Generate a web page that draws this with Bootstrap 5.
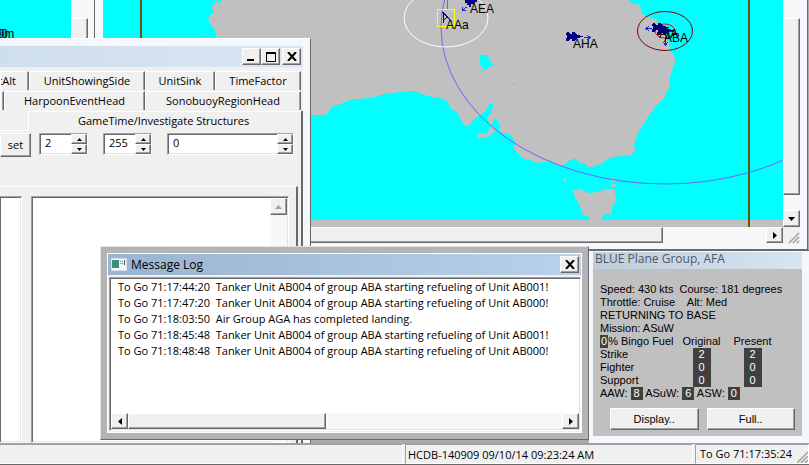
<!DOCTYPE html>
<html lang="en">
<head>
<meta charset="utf-8">
<meta name="viewport" content="width=device-width, initial-scale=1">
<title>Harpoon – Message Log</title>
<link href="https://cdn.jsdelivr.net/npm/bootstrap@5.3.0/dist/css/bootstrap.min.css" rel="stylesheet">
<style>
:root{--face:#f0f0f0;--frame:#f4f7fc;--shadow:#696969;--land:#c0c0c0;--sea:#0ff}
body{font:11px/16px "Open Sans","Noto Sans",sans-serif;color:#000;background:#ababab}
button,input{font:inherit;color:inherit;border-radius:0}
.win{position:absolute;background:var(--frame)}
.raised{background:var(--face);border:1px solid;border-color:#fff var(--shadow) var(--shadow) #fff;box-shadow:inset -1px -1px #a0a0a0;padding:0;display:flex;align-items:center;justify-content:center;flex:none}
.sunken{background:#fff;border:1px solid;border-color:#a0a0a0 #fff #fff #a0a0a0;box-shadow:inset 1px 1px var(--shadow),inset -1px -1px #e3e3e3}
.track{background:repeating-conic-gradient(#fff 0 25%,#f0f0f0 0 50%) 0 0/2px 2px}
.sb-btn{width:17px;height:17px}
.cap-btn{width:19px;height:17px}
.cap-close{margin-left:2px}
.win-left{left:0;top:0;width:95px;height:249px;border-right:1px solid var(--shadow)}
.win-map{left:95px;right:1px;top:0;height:250px;padding:0 7px 6px 8px;border-right:1px solid var(--shadow);border-bottom:1px solid var(--shadow)}
.v-bar{width:17px}
.h-bar{height:16px}
.thumb-v{height:177px;width:17px}
.track-gap{height:18px}
.win-dlg{left:0;top:38px;width:311px;bottom:0;padding:7px 7px 0 0;border-top:1px solid #fff;border-right:1px solid var(--shadow)}
.dlg-title{height:21px;background:linear-gradient(90deg,#cfdeec,#dae6f3);padding-right:2px}
.dlg-face{background:var(--face);padding-top:4px}
.tab-row{height:20px}
.tab-btn{background:var(--face);border:0;border-top:1px solid #fff;border-left:1px solid #fff;border-right:1px solid var(--shadow);box-shadow:inset -1px 0 #a0a0a0;padding:0;white-space:nowrap;overflow:hidden;height:19px;display:flex;align-items:center;justify-content:center;flex:none}
.w-cut{width:29px;justify-content:flex-end;padding-right:12px}
.w-side{width:116px}.w-sink{width:70px}.w-time{width:86px}
.w-gap{width:4px}.w-harp{width:141px}.w-sono{width:156px}
.tab-panel{border-right:2px solid var(--shadow)}
.panel-title{height:22px;line-height:18px;border-top:1px solid #fff;padding-left:49px}
.edge-l{width:29px;height:20px;border-bottom:1px solid #fff;border-right:1px solid #fff}
.ctl-row{height:24px;gap:15px}
.set-btn{width:31px;height:24px;margin-right:-7px}
.spin{height:22px}
.spin input{border:0;outline:0;background:none;min-width:0;flex:1;padding:0 0 2px 5px;line-height:16px}
.spin-btn{width:16px;height:10px}
.spin-a{width:49px}.spin-b{width:49px}.spin-c{width:127px}
.inner{border-top:1px solid #fff;border-right:2px solid var(--shadow);margin:29px 3px 0 0;padding:9px 7px 0 0}
.list-a{width:22px;border-left:0}
.list-b{margin-left:9px;padding:1px 1px 0 0}
.win-log{left:100px;top:246px;width:489px;height:194px;background:#b4b4b4;border:1px solid;border-color:#e3e3e3 var(--shadow) var(--shadow) #e3e3e3;padding:6px}
.log-in{background:#f0f0f0;border:1px solid #fff}
.log-title{height:21px;background:linear-gradient(90deg,#99b4d1,#b9d1ea);padding:0 2px 0 3px;font-size:12px}
.log-box{margin:2px 0 1px 1px;padding:1px}
.log-list{padding-left:7px;white-space:pre}
.w-thumb-log{width:198px}
.w-thumb-map{width:560px}
.win-plane{right:0;left:589px;top:250px;bottom:0;padding:1px 7px 7px 4px;border-top:1px solid var(--shadow)}
.plane-title{height:17px;line-height:13px;padding-left:2px;font-size:12px;color:#4b5866;background:linear-gradient(90deg,#bfcddb,#d7e4f2)}
.plane-body{background:var(--land);font:11px/13px "Liberation Sans",Arial,sans-serif;padding:14px 7px 0 7px;white-space:pre}
.plane-body table{width:178px;table-layout:fixed}
.plane-body th,.plane-body td{padding:0;font-weight:400}
.c-label{width:76px}
.val{background:#404040;color:#fff;display:inline-block;height:13px;padding:0 3px}
.val-s{padding:0 1px}
.val-w{width:18px}
.plane-btns{margin:8px 0 0 10px}
.plane-btn{height:22px;flex:1}
.status{height:22px;background:var(--face);border-top:1px solid #a0a0a0;border-bottom:1px solid var(--shadow);line-height:19px}
.cell{border:1px solid;border-color:#a0a0a0 #fff #fff #a0a0a0;padding-left:2px;white-space:nowrap}
.cell-a{flex:1;border-left:0}
.cell-b{width:288px}.cell-c{width:114px;padding-left:4px}
.gap-s{gap:2px}
.map-text{font:12px "Liberation Sans",Arial,sans-serif}
</style>
<script src="https://cdn.jsdelivr.net/npm/bootstrap@5.3.0/dist/js/bootstrap.bundle.min.js"></script>
</head>
<body class="vh-100 d-flex flex-column overflow-hidden">
<main class="flex-grow-1 position-relative overflow-hidden">

  <section class="win win-left d-flex" aria-label="Unit map">
    <svg width="71" height="249" class="flex-shrink-0"><rect width="71" height="249" fill="#0ff"/><g class="map-text"><text x="-12" y="38">000</text><text x="-9" y="38">00m</text></g></svg>
    <div class="track v-bar d-flex flex-column"><div class="track-gap"></div><div class="raised w-100 flex-grow-1"></div></div>
  </section>

  <section class="win win-map d-flex flex-column" aria-label="Strategic map">
    <div class="d-flex flex-grow-1 overflow-hidden">
      <svg class="flex-grow-1 h-100" style="min-width:0" viewBox="103 0 680 227" preserveAspectRatio="xMaxYMin slice" shape-rendering="crispEdges">
        <rect x="103" width="680" height="227" fill="#0ff"/>
        <path fill="#c0c0c0" d="M216 0L215 4 212 6 213 12 208 19 211 25 215 30 217 38 220 115 H325L329 111 332 107 340 104 353 99 372 98 380 95 390 93 402 92 415 91 422 94 428 96 440 98 442 100 447 101 449 104 450 108 457 112 460 118 463 122 464 126 468 126 471 124 473 120 480 115 485 112 488 106 491 102 493 105 492 112 489 115 488 120 490 125 493 123 493 119 496 118 500 125 499 131 503 133 509 134 514 138 515 143 514 148 518 154 522 158 530 160 536 163 541 162 550 162 559 166 565 164 570 160 576 158 579 163 584 163 589 167 596 166 603 163 608 159 612 157 632 155 635 150 634 145 637 135 643 125 648 117 655 107 664 98 666 93 669 88 670 78 674 66 675 60 674 55 670 50 669 42 660 27 656 19 645 16 642 12 640 5 633 4 628 0z"/>
        <path fill="#c0c0c0" d="M478 134h7l4-3 1-4 4-1 1 4-4 5-4 2-9 1zM573 190l7-1 8 4 9-1 11-3 7 1 1 10-4 7-1 8-4-2-5 4 0 4h-12l-1-4-6-3-3-8-5-8zM564 177l2 0v5h-2zM611 177l4 3v2h-3zM611 184h5v3h-4zM103 220h680v7H103zM204 33h1v2h-1z"/>
        <path fill="#0ff" d="M480 55h6l3 3 0 3 3 1 1 3-3 1-3 3-5 2 1-3-3-3zM512 83h4v1h-4zM217 0h4l-2 3h-2z"/>
        <path stroke="#705010" stroke-width="2" d="M141 0v227M749 0v227"/>
        <g fill="none" shape-rendering="auto">
          <ellipse cx="665" cy="27" rx="224" ry="157" stroke="#6a6af0"/>
          <ellipse cx="446" cy="18" rx="42" ry="29" stroke="#fff"/>
          <ellipse cx="665" cy="31" rx="27.5" ry="19.5" stroke="#800000"/>
          <ellipse cx="665" cy="31" rx="10" ry="7" stroke="#c02020"/>
        </g>
        <path stroke="#777" d="M447.500 0v10"/>
        <path fill="none" stroke="#ff0" d="M437.500 9.500h17v17h-17z"/>
        <g id="plane" fill="#000080"><path d="M567 32h2l1 2h2v-2h2l2 2 1 1h3v1h3v1h-3v1h-3l-3 3h-2v-2h-2l-2 2h-2v-3h1v-3h-1z"/></g>
        <use href="#plane" x="86" y="-9"/><use href="#plane" x="91" y="-6"/>
        <path fill="#000080" d="M465 0h12v2h-2v2h-4v3h-2V5h-2V3h-2z"/>
        <path fill="none" stroke="#000080" stroke-width="1" shape-rendering="auto" d="M443.500 12v11M442 12l10 10M444 20l4-4M444 13l8 9"/>
        <path fill="none" stroke="#2020e0" d="M584 37.500h6M587 35l3 2.500-3 2.500M645.500 28.500h6M649 26l-3 2.500 3 2.500M665.500 38v7M663 42l2.500 3 2.500-3M462 10l5-3M462 7v3h4M668 31.500h6M671 29l-3 3"/>
        <g class="map-text"><text x="573" y="48">AHA</text><text x="470" y="13">AEA</text><text x="446" y="29">AAa</text><text x="659" y="38">AIA</text><text x="664" y="42">ABA</text></g>
      </svg>
      <div class="track v-bar d-flex flex-column"><div class="track-gap"></div><div class="raised thumb-v"></div><div class="flex-grow-1"></div>
        <button class="raised sb-btn" aria-label="Scroll down"><svg width="7" height="4"><path d="M0 0h7L3.500 4z"/></svg></button></div>
    </div>
    <div class="d-flex h-bar">
      <div class="track d-flex flex-grow-1"><div class="raised w-thumb-map"></div><div class="flex-grow-1"></div><button class="raised sb-btn h-100" aria-label="Scroll right"><svg width="4" height="7"><path d="M0 0v7l4-3.500z"/></svg></button></div>
      <svg width="17" height="17" class="flex-shrink-0"><rect width="17" height="17" fill="#f0f0f0"/><path stroke="#a0a0a0" stroke-width="1.500" d="M6 16L16 6M10 16l6-6M14 16l2-2"/></svg>
    </div>
  </section>

  <section class="win win-plane d-flex flex-column" aria-label="Plane group">
    <div class="plane-title">BLUE Plane Group, AFA</div>
    <div class="plane-body flex-grow-1"><div>Speed: 430 kts  Course: 181 degrees</div><div>Throttle: Cruise    Alt: Med</div><div>RETURNING TO BASE</div><div>Mission: ASuW</div><table>
        <thead><tr><th class="c-label" scope="col"><span class="val val-s">0</span>% Bingo Fuel</th><th scope="col" class="text-center">Original</th><th scope="col" class="text-center">Present</th></tr></thead>
        <tbody>
        <tr><th scope="row">Strike</th><td class="text-center"><span class="val val-w">2</span></td><td class="text-center"><span class="val val-w">2</span></td></tr>
        <tr><th scope="row">Fighter</th><td class="text-center"><span class="val val-w">0</span></td><td class="text-center"><span class="val val-w">0</span></td></tr>
        <tr><th scope="row">Support</th><td class="text-center"><span class="val val-w">0</span></td><td class="text-center"><span class="val val-w">0</span></td></tr>
        </tbody></table><div>AAW: <span class="val">8</span> ASuW: <span class="val">6</span> ASW: <span class="val">0</span></div><div class="plane-btns d-flex gap-2"><button class="raised plane-btn">Display..</button><button class="raised plane-btn">Full..</button></div></div>
  </section>

  <section class="win win-dlg d-flex flex-column" aria-label="Investigate structures">
    <div class="dlg-title d-flex align-items-center justify-content-end">
      <button class="raised cap-btn" aria-label="Minimize"><svg width="9" height="9"><path d="M0 7h7v2H0z"/></svg></button>
      <button class="raised cap-btn" aria-label="Maximize"><svg width="10" height="10"><path fill="none" stroke="#000" d="M.5 1v8.500h9V1"/><path d="M0 0h10v2H0z"/></svg></button>
      <button class="raised cap-btn cap-close" aria-label="Close"><svg width="10" height="9"><path stroke="#000" stroke-width="2" d="M1 0l8 9M9 0L1 9"/></svg></button>
    </div>
    <div class="dlg-face flex-grow-1 d-flex flex-column">
      <div class="tab-row d-flex">
        <button class="tab-btn w-cut">tAlt</button><button class="tab-btn w-side">UnitShowingSide</button><button class="tab-btn w-sink">UnitSink</button><button class="tab-btn w-time">TimeFactor</button>
      </div>
      <div class="tab-row d-flex">
        <button class="tab-btn w-gap" aria-label="Previous tab"></button><button class="tab-btn w-harp">HarpoonEventHead</button><button class="tab-btn w-sono">SonobuoyRegionHead</button>
      </div>
      <div class="tab-panel flex-grow-1 d-flex flex-column">
        <div class="d-flex"><div class="edge-l"></div><div class="panel-title flex-grow-1">GameTime/Investigate Structures</div></div>
        <div class="ctl-row d-flex">
          <button class="raised set-btn">set</button>
          <div class="spin spin-a sunken d-flex"><input type="text" value="2" aria-label="Game time"><div><button class="raised spin-btn" aria-label="Up"><svg width="5" height="3"><path d="M0 3h5L2.500 0z"/></svg></button><button class="raised spin-btn" aria-label="Down"><svg width="5" height="3"><path d="M0 0h5L2.500 3z"/></svg></button></div></div>
          <div class="spin spin-b sunken d-flex"><input type="text" value="255" aria-label="Structure"><div><button class="raised spin-btn" aria-label="Up"><svg width="5" height="3"><path d="M0 3h5L2.500 0z"/></svg></button><button class="raised spin-btn" aria-label="Down"><svg width="5" height="3"><path d="M0 0h5L2.500 3z"/></svg></button></div></div>
          <div class="spin spin-c sunken d-flex"><input type="text" value="0" aria-label="Value"><div><button class="raised spin-btn" aria-label="Up"><svg width="5" height="3"><path d="M0 3h5L2.500 0z"/></svg></button><button class="raised spin-btn" aria-label="Down"><svg width="5" height="3"><path d="M0 0h5L2.500 3z"/></svg></button></div></div>
        </div>
        <div class="inner flex-grow-1 d-flex">
          <div class="sunken list-a"></div>
          <div class="sunken list-b flex-grow-1 d-flex justify-content-end"><div class="track v-bar"><button class="raised sb-btn" aria-label="Scroll up" disabled><svg width="7" height="4"><path fill="#a0a0a0" d="M0 4h7L3.500 0z"/></svg></button></div></div>
        </div>
      </div>
    </div>
  </section>

  <section class="win win-log d-flex" aria-label="Message Log">
    <div class="log-in flex-grow-1 d-flex flex-column">
      <div class="log-title d-flex align-items-center">
        <svg width="16" height="13" class="me-1"><path fill="#f4f8fa" stroke="#d8dfe6" d="M.5.500h15v12H.5z"/><path fill="#3c8c7c" d="M1 2h7v8H1z"/><path fill="#9aa" d="M9 3h3v1H9zM9 5h3v1H9z"/><path fill="#456" d="M13 2h1v5h-1z"/></svg>
        <span class="flex-grow-1">Message Log</span>
        <button class="raised cap-btn" aria-label="Close"><svg width="10" height="9"><path stroke="#000" stroke-width="2" d="M1 0l8 9M9 0L1 9"/></svg></button>
      </div>
      <div class="log-box sunken flex-grow-1 d-flex flex-column">
        <ul class="log-list list-unstyled mb-0 flex-grow-1"><li>To Go 71:17:44:20  Tanker Unit AB004 of group ABA starting refueling of Unit AB001!</li><li>To Go 71:17:47:20  Tanker Unit AB004 of group ABA starting refueling of Unit AB000!</li><li>To Go 71:18:03:50  Air Group AGA has completed landing.</li><li>To Go 71:18:45:48  Tanker Unit AB004 of group ABA starting refueling of Unit AB001!</li><li>To Go 71:18:48:48  Tanker Unit AB004 of group ABA starting refueling of Unit AB000!</li></ul>
        <div class="track h-bar d-flex"><button class="raised sb-btn h-100" aria-label="Scroll left"><svg width="4" height="7"><path d="M4 0v7L0 3.500z"/></svg></button><div class="raised w-thumb-log"></div><div class="flex-grow-1"></div><button class="raised sb-btn h-100" aria-label="Scroll right"><svg width="4" height="7"><path d="M0 0v7l4-3.500z"/></svg></button></div>
      </div>
    </div>
  </section>
</main>

<footer class="status gap-s d-flex flex-shrink-0">
  <div class="cell cell-a"></div>
  <div class="cell cell-b">HCDB-140909 09/10/14 09:23:24 AM</div>
  <div class="cell cell-c d-flex justify-content-between align-items-end"><span>To Go 71:17:35:24</span><svg width="11" height="12"><path stroke="#a0a0a0" stroke-width="1.500" d="M0 12L11 1M4 12l7-7M8 12l3-3"/></svg></div>
</footer>
</body>
</html>
